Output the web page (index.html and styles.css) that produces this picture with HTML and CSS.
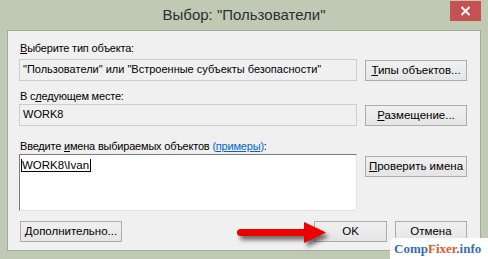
FILE: index.html
```html
<!DOCTYPE html>
<html lang="ru">
<head>
    <meta charset="UTF-8">
    <meta name="viewport" content="width=device-width, initial-scale=1.0">
    <title>Выбор: "Пользователи"</title>
    <link rel="stylesheet" href="styles.css">
</head>
<body>
    <div class="window">
        <div class="titlebar">
            <span></span>
            <div class="title">Выбор: "Пользователи"</div>
            <div class="close">
                <svg width="11" height="10" viewBox="0 0 11 10">
                    <path d="M1.5 1 L9.5 9 M9.5 1 L1.5 9" stroke="#ffffff" stroke-width="2"/>
                </svg>
            </div>
        </div>

        <div class="client">
            <div class="label first"><u>В</u>ыберите тип объекта:</div>
            <div class="row row-type">
                <div class="field">"Пользователи" или "Встроенные субъекты безопасности"</div>
                <div class="button"><u>Т</u>ипы объектов...</div>
            </div>

            <div class="label">В с<u>л</u>едующем месте:</div>
            <div class="row row-place">
                <div class="field">WORK8</div>
                <div class="button"><u>Р</u>азмещение...</div>
            </div>

            <div class="label">Введите <u>и</u>мена выбираемых объектов <span class="link">(<u>примеры</u>)</span>:</div>
            <div class="row">
                <div class="names">
                    <span class="entry">WORK8\Ivan</span>
                </div>
                <div class="button check"><u>П</u>роверить имена</div>
            </div>

            <div class="actions">
                <div class="button more"><u>Д</u>ополнительно...</div>
                <div class="action-group">
                    <div class="button ok">OK</div>
                    <div class="button cancel">Отмена</div>
                </div>
            </div>
        </div>

        <!-- стрелка поверх кнопки OK -->
        <svg class="arrow" width="110" height="40" viewBox="0 0 110 40">
            <line x1="10.5" y1="18.5" x2="78" y2="18.5" stroke="#ee0000" stroke-width="7" stroke-linecap="round"/>
            <polygon points="74,8 96,18.5 74,29" fill="#ee0000"/>
        </svg>

        <div class="watermark"><span class="blue">Comp</span><span class="orange">Fixer</span><span class="blue">.info</span></div>
    </div>
</body>
</html>
```

FILE: styles.css
```css
body {
    margin: 0;
    padding: 0;
    background-color: #bfc9b4;
}

.window {
    position: relative;
    width: 488px;
    height: 259px;
    box-sizing: border-box;
    padding: 0 7px 8px 7px;
    background-color: #bfc9b4;
    font-family: "Liberation Sans", Arial, sans-serif;
    overflow: hidden;
}

.titlebar {
    height: 30px;
    display: grid;
    grid-template-columns: 1fr auto 1fr;
    align-items: start;
}

.title {
    font-size: 15px;
    line-height: 30px;
    color: #2f2f2f;
    white-space: nowrap;
}

.close {
    justify-self: end;
    width: 31px;
    height: 20px;
    margin-top: 1px;
    background-color: #c75050;
    display: flex;
    align-items: center;
    justify-content: center;
}

.client {
    height: 221px;
    box-sizing: border-box;
    border: 1px solid #a3ac9c;
    background-color: #f0f0f0;
    padding: 10px 13px 0 11px;
}

.label {
    font-size: 11px;
    letter-spacing: -0.2px;
    line-height: 14px;
    color: #000000;
    margin-bottom: 1px;
    margin-left: 1px;
    white-space: nowrap;
}

.label.first {
    margin-bottom: 4px;
}

.link {
    color: #0066cc;
}

.row {
    display: flex;
    gap: 8px;
    align-items: flex-start;
}

.row-type {
    margin-bottom: 8px;
}

.row-place {
    margin-bottom: 13px;
}

.field {
    width: 338px;
    height: 22px;
    box-sizing: border-box;
    border: 1px solid #cdcdcd;
    background-color: #f0f0f0;
    padding-left: 3px;
    font-size: 11px;
    line-height: 19px;
    color: #000000;
    white-space: nowrap;
}

.button {
    width: 102px;
    height: 21px;
    margin-top: 1px;
    box-sizing: border-box;
    border: 1px solid #acacac;
    background: linear-gradient(#f0f0f0, #e5e5e5);
    font-size: 11.5px;
    line-height: 19px;
    text-align: center;
    color: #000000;
    white-space: nowrap;
}

.button.check {
    margin-top: 2px;
}

.names {
    width: 338px;
    height: 57px;
    box-sizing: border-box;
    border: 1px solid;
    border-color: #7a7a7a #e3e3e3 #e3e3e3 #7a7a7a;
    background-color: #ffffff;
    padding: 3px 0 0 1px;
    font-size: 11.5px;
    line-height: 14px;
}

.entry {
    border: 1px solid #000000;
    border-top: none;
    padding: 0 1px 0 0;
}

.actions {
    margin-top: 10px;
    display: flex;
    justify-content: space-between;
}

.button.more {
    margin-left: 1px;
    margin-top: 0;
}

.action-group {
    display: flex;
    gap: 8px;
}

.button.ok {
    width: 73px;
    margin-top: 0;
}

.button.cancel {
    width: 72px;
    margin-top: 0;
}

.arrow {
    position: absolute;
    left: 230px;
    top: 214px;
    filter: drop-shadow(3px 4px 2px rgba(0, 0, 0, 0.55));
}

.watermark {
    position: absolute;
    right: 0;
    bottom: 0;
    width: 98px;
    height: 21px;
    box-sizing: border-box;
    padding-left: 4px;
    background-color: #ffffff;
    border-radius: 5px 0 0 0;
    font-family: "Liberation Serif", "Times New Roman", serif;
    font-weight: bold;
    font-size: 13px;
    line-height: 21px;
    white-space: nowrap;
}

.blue {
    color: #3a6db3;
}

.orange {
    color: #e05a2b;
}
```
